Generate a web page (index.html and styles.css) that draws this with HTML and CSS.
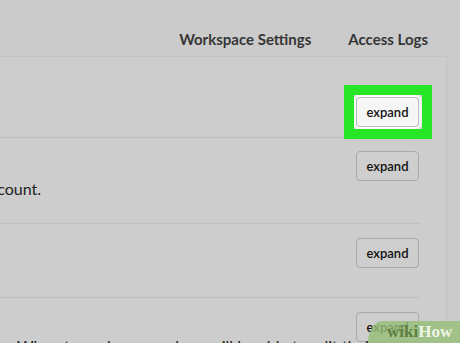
FILE: index.html
```html
<!DOCTYPE html>
<html>
<head>
<meta charset="utf-8">
<link rel="stylesheet" href="styles.css">
</head>
<body>
<header class="topnav">
  <a class="nav-link">Workspace Settings</a>
  <a class="nav-link">Access Logs</a>
</header>
<section class="panel">
  <div class="row row-first">
    <div class="row-main"></div>
    <span class="highlight"><button class="btn btn-active">expand</button></span>
  </div>
  <div class="row row-second">
    <div class="row-main">
      <p class="desc">Choose how people can sign in to your account.</p>
    </div>
    <button class="btn">expand</button>
  </div>
  <div class="row row-third">
    <div class="row-main"></div>
    <button class="btn">expand</button>
  </div>
  <div class="row row-fourth">
    <div class="row-main">
      <p class="desc-bottom">When turned on, members will be able to edit their own messages.</p>
    </div>
    <button class="btn">expand</button>
  </div>
</section>
<div class="watermark"><span class="wm-wiki">wiki</span><span class="wm-how">How</span></div>
</body>
</html>
```

FILE: styles.css
```css
html, body {
  margin: 0;
  padding: 0;
  height: 100%;
  overflow: hidden;
}
body {
  background: #cbcbcb;
  font-family: Lato, "Open Sans", "Liberation Sans", sans-serif;
  color: #2a2a2a;
  position: relative;
}
.topnav {
  height: 56px;
  display: flex;
  justify-content: flex-end;
  align-items: flex-start;
  gap: 37px;
  padding-right: 32px;
  box-sizing: border-box;
}
.nav-link {
  font-size: 15px;
  font-weight: 700;
  color: #363636;
  margin-top: 30px;
  line-height: 18px;
}
.panel {
  width: 446px;
  border-top: 1px solid #c2c2c2;
  border-right: 1px solid #c2c2c2;
  background: #cdcdcd;
  height: 300px;
}
.row {
  display: flex;
  justify-content: space-between;
  align-items: flex-start;
  width: 420px;
  border-bottom: 1px solid #bfbfbf;
  box-sizing: border-box;
}
.row-first {
  height: 81px;
  padding-top: 40px;
}
.row-second {
  height: 86px;
  padding-top: 13px;
}
.row-third {
  height: 74px;
  padding-top: 14px;
}
.row-fourth {
  padding-top: 14px;
  border-bottom: none;
}
.row-main {
  flex: 1;
  min-width: 0;
  position: relative;
}
.desc {
  margin: 28px 0 0 0;
  width: 41px;
  display: flex;
  justify-content: flex-end;
  white-space: nowrap;
  font-size: 16px;
  line-height: 20px;
  color: #222;
}
.desc-bottom {
  margin: 24px 0 0 17px;
  white-space: nowrap;
  font-size: 16px;
  line-height: 20px;
  color: #222;
}
.highlight {
  display: flex;
  flex: none;
  margin-right: 1px;
  box-shadow: 0 0 3px 3px #ffffff;
  border-radius: 4px;
  position: relative;
}
.highlight::before {
  content: "";
  position: absolute;
  left: -12px;
  top: -12px;
  right: -13px;
  bottom: -12px;
  border: 10px solid #27e627;
  pointer-events: none;
}
.btn {
  width: 63px;
  height: 30px;
  margin-right: 1px;
  padding: 0;
  border: 1px solid #a9a9a9;
  border-radius: 4px;
  background: #cecece;
  font-family: Lato, "Open Sans", "Liberation Sans", sans-serif;
  font-size: 13px;
  font-weight: 600;
  color: #111;
  flex: none;
}
.btn-active {
  margin-right: 0;
  background: #f6f6f6;
  border-color: #bdbdbd;
}
.watermark {
  position: absolute;
  right: 0;
  bottom: 0;
  width: 92px;
  height: 22px;
  background: rgba(150, 190, 120, 0.82);
  border-top-left-radius: 14px 22px;
  font-family: "Liberation Serif", "DejaVu Serif", serif;
  font-weight: bold;
  font-size: 17px;
  line-height: 22px;
  padding-left: 19px;
  box-sizing: border-box;
  white-space: nowrap;
}
.wm-wiki {
  color: #5f7f40;
}
.wm-how {
  color: #eef5e6;
}
```
